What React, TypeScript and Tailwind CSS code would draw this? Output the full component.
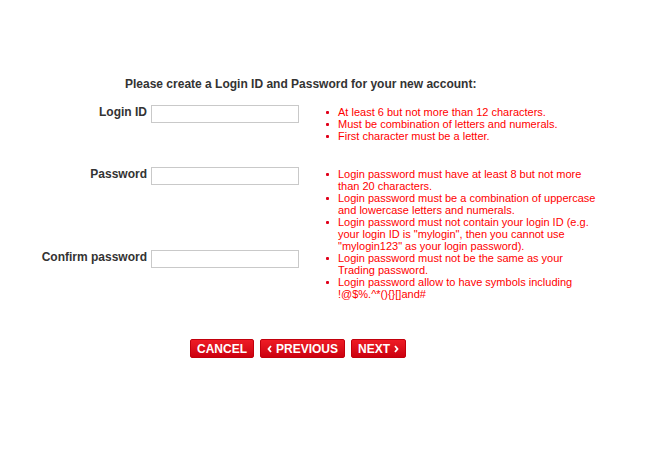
import React from "react";

const loginRules = [
  "At least 6 but not more than 12 characters.",
  "Must be combination of letters and numerals.",
  "First character must be a letter.",
];

const passwordRules = [
  "Login password must have at least 8 but not more than 20 characters.",
  "Login password must be a combination of uppercase and lowercase letters and numerals.",
  'Login password must not contain your login ID (e.g. your login ID is "mylogin", then you cannot use "mylogin123" as your login password).',
  "Login password must not be the same as your Trading password.",
  "Login password allow to have symbols including !@$%.^*(){}[]and#",
];

function Field({ label, type = "text" }: { label: string; type?: string }) {
  return (
    <div className="flex items-start justify-end gap-[4px]">
      <span className="text-[12px] font-bold leading-[14px] text-[#333]">{label}</span>
      <input
        type={type}
        className="h-[18px] w-[148px] border border-[#c9c9c9] bg-white outline-none"
      />
    </div>
  );
}

function Rules({ items }: { items: string[] }) {
  return (
    <ul className="ml-[27px] w-[273px] text-[11px] leading-[12px] text-[#f00]">
      {items.map((item) => (
        <li key={item} className="flex">
          <span className="mt-[5px] mr-[9px] h-[3px] w-[3px] shrink-0 rounded-[1px] bg-[#e0001a]" />
          <span className="w-[261px]">{item}</span>
        </li>
      ))}
    </ul>
  );
}

function RedButton({ children }: { children: React.ReactNode }) {
  return (
    <button className="flex h-[19px] items-center gap-[4px] rounded-[2px] border border-[#c2000c] bg-gradient-to-b from-[#ee1b25] to-[#cc000f] px-[6px] text-[12px] font-bold leading-none text-white">
      {children}
    </button>
  );
}

function Chevron({ dir }: { dir: "left" | "right" }) {
  return (
    <svg width="5" height="8" viewBox="0 0 5 8">
      <polyline
        points={dir === "left" ? "4,1 1.5,4 4,7" : "1,1 3.5,4 1,7"}
        fill="none"
        stroke="white"
        strokeWidth="1.8"
      />
    </svg>
  );
}

export default function App() {
  return (
    <div
      className="min-h-[462px] w-[650px] bg-white pt-[77px]"
      style={{ fontFamily: '"Liberation Sans", Arial, sans-serif' }}
    >
      <h1 className="pl-[125px] text-[12px] font-bold leading-[14px] text-[#333]">
        Please create a Login ID and Password for your new account:
      </h1>

      <div className="mt-[14px] flex">
        <div className="w-[299px]">
          <Field label="Login ID" />
        </div>
        <div className="mt-[1px]">
          <Rules items={loginRules} />
        </div>
      </div>

      <div className="mt-[25px] flex">
        <div className="flex w-[299px] flex-col gap-[65px]">
          <Field label="Password" type="password" />
          <Field label="Confirm password" type="password" />
        </div>
        <div className="mt-[1px]">
          <Rules items={passwordRules} />
        </div>
      </div>

      <div className="mt-[39px] flex gap-[6px] pl-[190px]">
        <RedButton>CANCEL</RedButton>
        <RedButton>
          <Chevron dir="left" />
          PREVIOUS
        </RedButton>
        <RedButton>
          NEXT
          <Chevron dir="right" />
        </RedButton>
      </div>
    </div>
  );
}
